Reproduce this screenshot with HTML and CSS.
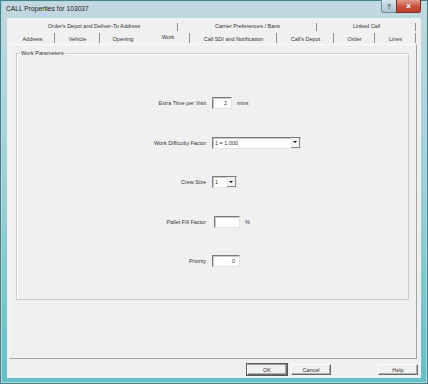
FILE: index.html
```html
<!DOCTYPE html>
<html>
<head>
<meta charset="utf-8">
<title>CALL Properties for 103037</title>
<link rel="stylesheet" href="styles.css">
</head>
<body>
<div class="window">
  <div class="titlebar">
    <span class="title">CALL Properties for 103037</span>
    <div class="caption-btns">
      <span class="cb cb-help">?</span>
      <span class="cb cb-close">x</span>
    </div>
  </div>
  <div class="client">
    <div class="tabs">
      <div class="tabrow row1">
        <span class="tab w168 sep">Order's Depot and Deliver-To Address</span>
        <span class="tab w139 sep">Carrier Preferences / Bans</span>
        <span class="tab w99 sep">Linked Call</span>
      </div>
      <div class="tabrow row2">
        <span class="tab w45 sep">Address</span>
        <span class="tab w45 sep">Vehicle</span>
        <span class="tab w46">Opening</span>
        <span class="tab w44 sep selected">Work</span>
        <span class="tab w87 sep">Call SDI and Notification</span>
        <span class="tab w57 sep">Call's Depot</span>
        <span class="tab w41 sep">Order</span>
        <span class="tab w41 sep">Lines</span>
      </div>
    </div>
    <div class="panel">
      <fieldset class="group">
        <legend>Work Parameters</legend>
        <div class="form">
          <span class="label">Extra Time per Visit</span>
          <span class="ctrl"><span class="input w20 right">2</span><span class="unit">mins</span></span>

          <span class="label">Work Difficulty Factor</span>
          <span class="ctrl"><span class="select w89"><span class="val">1 = 1.000</span><span class="arrow"></span></span></span>

          <span class="label">Crew Size</span>
          <span class="ctrl"><span class="select w25"><span class="val">1</span><span class="arrow"></span></span></span>

          <span class="label">Pallet Fill Factor</span>
          <span class="ctrl"><span class="input w26 shift"></span><span class="unit">%</span></span>

          <span class="label">Priority</span>
          <span class="ctrl"><span class="input w28 right">0</span></span>
        </div>
      </fieldset>
    </div>
    <div class="buttons">
      <span class="btn default">OK</span>
      <span class="btn">Cancel</span>
      <span class="btn help">Help</span>
    </div>
  </div>
</div>
</body>
</html>
```

FILE: styles.css
```css
html, body {
  margin: 0;
  padding: 0;
  background: #6cc3c8;
}

body {
  font-family: "Liberation Sans", Arial, sans-serif;
  color: #333;
}

.window {
  box-sizing: border-box;
  width: 428px;
  height: 384px;
  padding: 0 7px 6px 7px;
  display: flex;
  flex-direction: column;
  background: linear-gradient(to bottom, #c4d8e1 0px, #bcd6de 40px, #9fd0d6 180px, #78c6cb 300px, #62c0c5 384px);
  box-shadow: inset 0 0 0 1px #4e7d86, inset 0 0 0 2px #a9dde1;
}

.titlebar {
  height: 18px;
  display: flex;
  align-items: flex-start;
  margin-left: -1px;
  flex: none;
}

.title {
  font-size: 6.6px;
  line-height: 18px;
  color: #222;
  letter-spacing: 0.05px;
}

.caption-btns {
  margin-left: auto;
  display: flex;
}

.cb {
  box-sizing: border-box;
  height: 13px;
  display: flex;
  align-items: center;
  justify-content: center;
  font-size: 7px;
  font-weight: bold;
}

.cb-help {
  width: 15px;
  background: linear-gradient(to bottom, #d6e5ec, #a9c4d0);
  border: 1px solid #6d8f9b;
  border-top: none;
  border-right: none;
  border-bottom-left-radius: 3px;
  color: #3b5663;
}

.cb-close {
  width: 25px;
  background: linear-gradient(to bottom, #e29c92, #c9503d 55%, #c0412f);
  border: 1px solid #7b2d24;
  border-top: none;
  border-bottom-right-radius: 3px;
  color: #fff;
  font-family: "DejaVu Sans", sans-serif;
}

.client {
  box-sizing: border-box;
  flex: 1;
  background: #f0f0f0;
  border: 1px solid #e6f2f3;
  display: flex;
  flex-direction: column;
}

.tabs {
  padding: 2px 0 0 2px;
  font-size: 5.5px;
  color: #333;
}

.tabrow {
  display: flex;
}

.row1 {
  height: 11px;
}

.row2 {
  height: 12px;
}

.tab {
  box-sizing: border-box;
  display: flex;
  align-items: center;
  justify-content: center;
  white-space: nowrap;
}

.row1 .tab {
  padding-bottom: 1px;
}

.row2 .tab {
  padding-top: 1px;
}

.row2 .selected {
  padding-top: 0;
  padding-bottom: 2px;
}

.sep {
  background: linear-gradient(#8e8e8e, #8e8e8e) right 2px / 1px 8px no-repeat;
}

.row2 .sep {
  background-position: right 1px;
  background-size: 1px 10px;
}

.w168 { width: 168px; }
.w139 { width: 139px; }
.w99 { width: 99px; }
.w45 { width: 45px; }
.w46 { width: 46px; }
.w44 { width: 44px; }
.w87 { width: 87px; }
.w57 { width: 57px; }
.w41 { width: 41px; }

.panel {
  box-sizing: border-box;
  width: 408px;
  height: 315px;
  margin-left: 1px;
  padding: 5px 0 0 6px;
  border-top: 1px solid #fafafa;
  border-left: 1px solid #fafafa;
  border-right: 1px solid #a3a3a3;
  border-bottom: 1px solid #a3a3a3;
  flex: none;
}

.group {
  box-sizing: border-box;
  margin: 0;
  padding: 0;
  min-width: 0;
  width: 393px;
  height: 250px;
  border: 1px solid #cdcdcd;
  box-shadow: inset 1px 1px 0 #fbfbfb;
}

.group legend {
  font-size: 5.5px;
  line-height: 7px;
  padding: 0 1px;
  margin-left: 3px;
  color: #333;
}

.form {
  display: grid;
  grid-template-columns: 189px auto;
  grid-auto-rows: 12px;
  column-gap: 6px;
  row-gap: 27.5px;
  padding-top: 40px;
  font-size: 5.5px;
}

.label {
  display: flex;
  align-items: center;
  justify-content: flex-end;
  white-space: nowrap;
}

.ctrl {
  display: flex;
  align-items: center;
}

.input, .select {
  box-sizing: border-box;
  height: 12px;
  background: #fff;
  border-top: 1px solid #7c7c7c;
  border-left: 1px solid #7c7c7c;
  border-right: 1px solid #e4e4e4;
  border-bottom: 1px solid #e4e4e4;
  box-shadow: inset 1px 1px 0 #c9c9c9;
  display: flex;
  align-items: center;
}

.input.right {
  justify-content: flex-end;
  padding-right: 4px;
}

.input.shift {
  margin-left: 2px;
}

.w20 { width: 20px; }
.w25 { width: 25px; }
.w26 { width: 26px; }
.w28 { width: 28px; }
.w89 { width: 89px; }

.unit {
  margin-left: 5px;
}

.select {
  padding-left: 2px;
  justify-content: space-between;
}

.select .val {
  white-space: nowrap;
}

.arrow {
  box-sizing: border-box;
  width: 9px;
  height: 10px;
  display: flex;
  align-items: center;
  justify-content: center;
  background: #f1f1f1;
  border-right: 1px solid #8a8a8a;
  border-bottom: 1px solid #8a8a8a;
}

.arrow::before {
  content: "";
  border-left: 2px solid transparent;
  border-right: 2px solid transparent;
  border-top: 2px solid #111;
}

.buttons {
  display: flex;
  justify-content: flex-end;
  margin-top: 5px;
  padding-right: 2px;
  gap: 4px;
  font-size: 5.5px;
}

.btn {
  box-sizing: border-box;
  width: 40px;
  height: 11px;
  display: flex;
  align-items: center;
  justify-content: center;
  background: #f0f0f0;
  border-top: 1px solid #fdfdfd;
  border-left: 1px solid #fdfdfd;
  border-right: 1px solid #6b6b6b;
  border-bottom: 1px solid #6b6b6b;
  box-shadow: inset -1px -1px 0 #b0b0b0;
}

.btn.default {
  outline: 1px solid #5a5a5a;
  border-top-color: #9a9a9a;
  border-left-color: #fdfdfd;
}

.btn.help {
  margin-left: 43px;
}
```
